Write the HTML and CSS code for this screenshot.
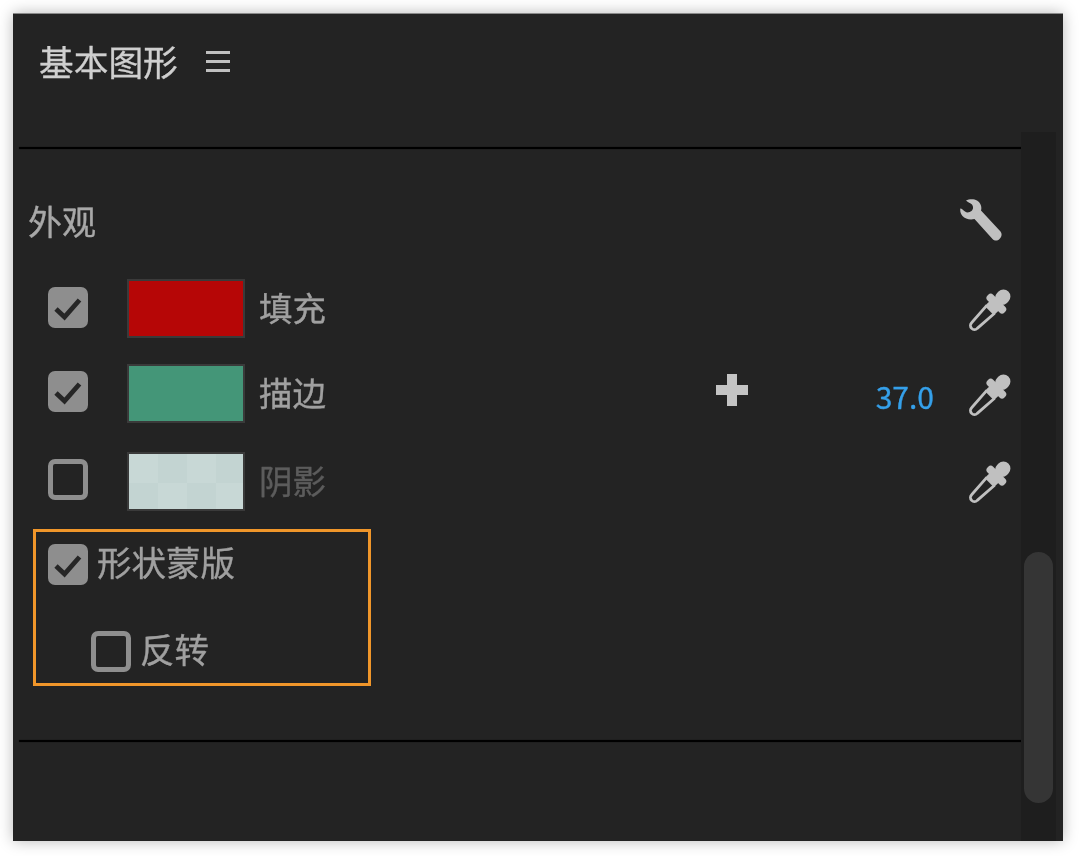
FILE: index.html
```html
<!DOCTYPE html>
<html lang="zh-CN">
<head>
<meta charset="utf-8">
<title>基本图形</title>
<link rel="stylesheet" href="styles.css">
</head>
<body>
<svg class="defs" width="0" height="0" aria-hidden="true">
  <symbol id="dropper" viewBox="0 0 42 42">
    <g transform="rotate(45 21 21)">
      <rect class="solid" x="14" y="-5" width="14" height="16" rx="7"/>
      <rect class="solid" x="9" y="8" width="24" height="8" rx="3.5"/>
      <rect class="solid" x="14.5" y="14" width="13" height="8"/>
      <path class="tube" d="M15.5 20 L17 43 a4 4 0 0 0 8 0 L26.5 20"/>
    </g>
  </symbol>
  <symbol id="check" viewBox="0 0 40 41">
    <path class="tick" d="M8 22 L16.5 30 L31.5 13"/>
  </symbol>
</svg>
<main class="panel">
  <div class="content">
    <header class="head">
      <h1 class="title">基本图形</h1>
      <span class="menu"><i></i><i></i><i></i></span>
    </header>
    <hr class="rule">
    <section class="section-head">
      <h2 class="section-title">外观</h2>
      <svg class="wrench" viewBox="0 0 42 42"><path d="M6 1.5 C9 0 14 -.2 17 1.5 C21 4 22 8 21 11.5 L40.5 32.5 C42.5 35 41.5 38 39.5 40 C37.5 42 34.5 42 32.5 40 L14.5 20 C10 21 5 20 2.5 17 C.5 15 0 12 .3 9.5 C2 9.5 3 11 5 12.5 C7 14 9.5 13.5 11.5 12 C13.5 10 13.5 7.5 12 5.5 C10.5 4 8 3.5 6 1.5 Z"/></svg>
    </section>
    <div class="row row-fill">
      <span class="box on"><svg class="check"><use href="#check"/></svg></span>
      <span class="swatch red"></span>
      <span class="label">填充</span>
      <span class="spacer"></span>
      <svg class="dropper"><use href="#dropper"/></svg>
    </div>
    <div class="row row-stroke">
      <span class="box on"><svg class="check"><use href="#check"/></svg></span>
      <span class="swatch green"></span>
      <span class="label">描边</span>
      <span class="spacer"></span>
      <span class="plus"></span>
      <span class="value">37.0</span>
      <svg class="dropper"><use href="#dropper"/></svg>
    </div>
    <div class="row row-shadow">
      <span class="box"></span>
      <span class="swatch checker"></span>
      <span class="label dim">阴影</span>
      <span class="spacer"></span>
      <svg class="dropper"><use href="#dropper"/></svg>
    </div>
    <div class="mask">
      <div class="mask-row">
        <span class="box on"><svg class="check"><use href="#check"/></svg></span>
        <span class="mask-label">形状蒙版</span>
      </div>
      <div class="mask-row invert">
        <span class="box"></span>
        <span class="mask-label">反转</span>
      </div>
    </div>
    <hr class="rule rule-bottom">
  </div>
  <div class="track"><div class="thumb"></div></div>
</main>
</body>
</html>
```
FILE: styles.css
```css
* { box-sizing: border-box; }
html, body { margin: 0; height: 100%; }
body {
  background: #fff;
  padding: 13px 17px 15px 13px;
  font-family: "Noto Sans CJK SC", "Liberation Sans", sans-serif;
  overflow: hidden;
}
.defs { display: block; height: 0; }
.panel {
  display: flex;
  width: 1050px;
  height: 828px;
  background: #232323;
  padding-right: 7px;
  border-top: 1px solid #8a8a8a;
  box-shadow: 0 0 14px rgba(0, 0, 0, .28);
  filter: blur(.7px);
  -webkit-text-stroke: .35px currentColor;
}
.content { width: 1008px; flex: none; }
.track {
  width: 35px;
  margin-top: 118px;
  background: #1e1e1e;
  padding: 420px 3px 38px;
}
.thumb { height: 251px; border-radius: 15px; background: #353535; }

.head { display: flex; align-items: center; height: 133px; padding: 0 0 40px 26px; }
.title { margin: 0; font-size: 34.7px; font-weight: 400; line-height: 48px; color: #cfcfcf; }
.menu { display: flex; flex-direction: column; gap: 6.5px; width: 24px; margin-left: 28px; margin-top: 2px; }
.menu i { display: block; height: 2.5px; background: #c0c0c0; }

.rule { height: 2px; margin: 0 0 0 6px; border: 0; background: #000; box-shadow: 0 0 1px #000; }
.rule-bottom { margin-top: 54px; }

.section-head { display: flex; align-items: center; justify-content: space-between; height: 48px; margin-top: 49px; padding: 0 19px 0 15px; }
.section-title { margin: 0 0 2px; font-size: 34px; font-weight: 400; line-height: 48px; color: #a8a8a8; }
.wrench { width: 42px; height: 42px; margin-bottom: 4px; }
.wrench path { fill: #c0c0c0; }

.row { display: flex; align-items: center; height: 57px; padding: 0 10px 0 35px; }
.row-fill { margin-top: 34px; }
.row-stroke { margin-top: 28px; }
.row-shadow { margin-top: 31px; }

.box { display: block; flex: none; width: 40px; height: 41px; border: 5px solid #8e8e8e; border-radius: 7px; }
.row .box { margin-bottom: 4px; }
.row-fill .box { margin-bottom: 2px; }
.box.on { background: #8e8e8e; border: 0; }
.check { display: block; width: 40px; height: 41px; }
.tick { fill: none; stroke: #262626; stroke-width: 4.8; }

.swatch { flex: none; width: 118px; height: 59px; margin: -1px 0 -1px 39px; border: 2px solid #3a3a3a; }
.red { background: #b60606; }
.green { background: #449678; }
.checker {
  background: repeating-conic-gradient(#c3d4d2 0 25%, #c8d8d6 0 50%) 0 0 / 58px 58px;
}
.label { margin: 0 0 4px 14px; font-size: 33.5px; line-height: 48px; color: #a0a0a0; }
.dim { color: #5c5c5c; }
.spacer { flex: 1; }
.value { margin-left: 128px; margin-right: 35px; font-size: 30px; line-height: 40px; color: #35a0ea; position: relative; top: 2px; }
.dropper { flex: none; width: 42px; height: 42px; margin-top: 3px; overflow: visible; }
.row-shadow .dropper { margin-top: 1px; }
.solid { fill: #c0c0c0; }
.tube { fill: none; stroke: #c0c0c0; stroke-width: 2.8; }

.plus {
  flex: none;
  width: 32px;
  height: 32px;
  margin-bottom: 8px;
  background:
    linear-gradient(#c4c4c4, #c4c4c4) center / 100% 10px no-repeat,
    linear-gradient(#c4c4c4, #c4c4c4) center / 10px 100% no-repeat;
}

.mask { width: 338px; height: 157px; margin: 19px 0 0 20px; padding: 12px 0 0 12px; border: 3px solid #f0962a; }
.mask-row { display: flex; align-items: center; height: 41px; }
.mask-label { margin: 0 0 6px 9px; font-size: 34.5px; line-height: 41px; color: #a0a0a0; }
.invert { margin-top: 46px; margin-left: 43px; }
```
